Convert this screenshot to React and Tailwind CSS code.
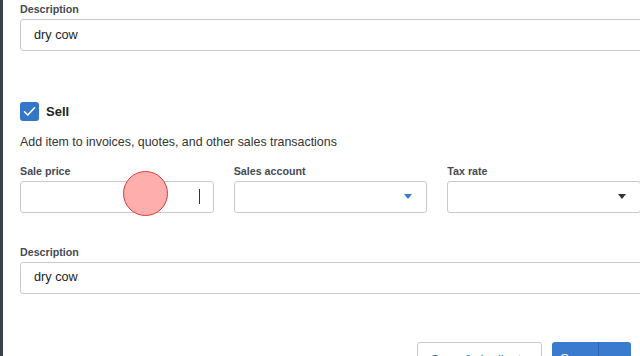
export default function App() {
  const label = "block h-[14px] leading-[14px] text-[10.7px] font-bold text-[#454a52]";
  const input = "h-[32px] rounded-[3px] border border-[#c9c9c9] bg-white";
  return (
    <div className="w-[640px] h-[356px] overflow-hidden flex bg-white" style={{ fontFamily: '"Liberation Sans", Arial, sans-serif' }}>
      <div className="w-[3px] h-full bg-[#3b404a] shrink-0"></div>
      <div className="flex-1 flex flex-col">
        <div className="pl-[17px] pt-[2px]">
          <span className={label}>Description</span>
          <div className={`${input} mt-[3px] w-[640px] flex items-center pl-[13px] pt-[2px] text-[12.7px] text-[#222]`}>dry cow</div>
        </div>
        <div className="mt-[33px] h-[2px] bg-[#e8e8e8]"></div>
        <div className="pl-[17px] pt-[18px] w-[657px]">
          <div className="flex items-center gap-[7px]">
            <div className="w-[19px] h-[19px] rounded-[3px] bg-[#3476c8] flex items-center justify-center">
              <svg width="13" height="11" viewBox="0 0 13 11" fill="none">
                <path d="M1.5 5.8 L4.8 9 L11.5 1.8" stroke="white" strokeWidth="1.6" strokeLinecap="round" strokeLinejoin="round" />
              </svg>
            </div>
            <span className="text-[13px] font-bold text-[#222]">Sell</span>
          </div>
          <div className="mt-[12px] h-[16px] leading-[16px] text-[12.4px] text-[#333]">Add item to invoices, quotes, and other sales transactions</div>
          <div className="mt-[14px] grid grid-cols-3 gap-x-[20px] w-[621px]">
            <div>
              <span className={label}>Sale price</span>
              <div className={`${input} mt-[3px] relative`}>
                <div className="absolute left-[178px] top-[7px] w-[1px] h-[15px] bg-[#333]"></div>
                <div className="absolute left-[102px] top-[-11px] w-[45px] h-[45px] rounded-full bg-[#ffaeae] border-[1.5px] border-[#db3a3a]"></div>
              </div>
            </div>
            <div>
              <span className={label}>Sales account</span>
              <div className={`${input} mt-[3px] flex items-center justify-end pr-[14px]`}>
                <svg width="8" height="5" viewBox="0 0 8 5"><path d="M0 0 H8 L4 5 Z" fill="#3a7bcc" /></svg>
              </div>
            </div>
            <div>
              <span className={label}>Tax rate</span>
              <div className={`${input} mt-[3px] flex items-center justify-end pr-[14px]`}>
                <svg width="8" height="5" viewBox="0 0 8 5"><path d="M0 0 H8 L4 5 Z" fill="#333" /></svg>
              </div>
            </div>
          </div>
          <div className="mt-[32px]">
            <span className={label}>Description</span>
            <div className={`${input} mt-[3px] w-[640px] flex items-center pl-[13px] text-[12.7px] text-[#222]`}>dry cow</div>
          </div>
          <div className="mt-[48px] flex justify-end pr-[29px] gap-[10px] w-[640px]">
            <div className="w-[125px] h-[30px] rounded-[3px] border border-[#c9c9c9] bg-white text-[13px] text-[#3476c8] flex justify-center pt-[7px]">Save & duplicate</div>
            <div className="w-[79px] h-[30px] rounded-[3px] bg-[#3a7bd0] flex">
              <div className="w-[46px] text-[13px] text-white flex justify-center pt-[7px]">Save</div>
              <div className="w-[1px] bg-[#2a62ad]"></div>
            </div>
          </div>
        </div>
      </div>
    </div>
  );
}
